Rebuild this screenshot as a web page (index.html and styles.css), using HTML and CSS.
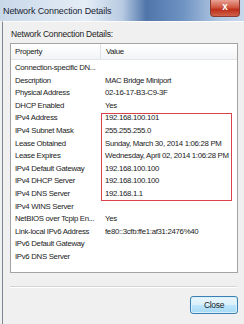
FILE: index.html
```html
<!DOCTYPE html>
<html>
<head>
    <title>Network Connection Details</title>
    <link rel="stylesheet" href="styles.css">
</head>
<body>
    <div class="window">
        <div class="titlebar">
            <span class="title">Network Connection Details</span>
            <span class="closeX">x</span>
        </div>
        <div class="frame">
            <div class="content">
                <div class="label">Network Connection Details:</div>
                <div class="listbox">
                    <div class="header">
                        <div class="col1">Property</div>
                        <div class="col2">Value</div>
                    </div>
                    <div class="rows">
                        <div class="row"><div class="col1">Connection-specific DN...</div><div class="col2"></div></div>
                        <div class="row"><div class="col1">Description</div><div class="col2">MAC Bridge Miniport</div></div>
                        <div class="row"><div class="col1">Physical Address</div><div class="col2">02-16-17-B3-C9-3F</div></div>
                        <div class="row"><div class="col1">DHCP Enabled</div><div class="col2">Yes</div></div>
                        <div class="highlight">
                            <div class="row"><div class="col1">IPv4 Address</div><div class="col2">192.168.100.101</div></div>
                            <div class="row"><div class="col1">IPv4 Subnet Mask</div><div class="col2">255.255.255.0</div></div>
                            <div class="row"><div class="col1">Lease Obtained</div><div class="col2">Sunday, March 30, 2014 1:06:28 PM</div></div>
                            <div class="row"><div class="col1">Lease Expires</div><div class="col2">Wednesday, April 02, 2014 1:06:28 PM</div></div>
                            <div class="row"><div class="col1">IPv4 Default Gateway</div><div class="col2">192.168.100.100</div></div>
                            <div class="row"><div class="col1">IPv4 DHCP Server</div><div class="col2">192.168.100.100</div></div>
                            <div class="row"><div class="col1">IPv4 DNS Server</div><div class="col2">192.168.1.1</div></div>
                            <div class="redbox"></div>
                        </div>
                        <div class="row"><div class="col1">IPv4 WINS Server</div><div class="col2"></div></div>
                        <div class="row"><div class="col1">NetBIOS over Tcpip En...</div><div class="col2">Yes</div></div>
                        <div class="row"><div class="col1">Link-local IPv6 Address</div><div class="col2">fe80::3cfb:ffe1:af31:2476%40</div></div>
                        <div class="row"><div class="col1">IPv6 Default Gateway</div><div class="col2"></div></div>
                        <div class="row"><div class="col1">IPv6 DNS Server</div><div class="col2"></div></div>
                    </div>
                </div>
                <div class="separator"></div>
                <div class="buttons">
                    <div class="button">Close</div>
                </div>
            </div>
        </div>
    </div>
</body>
</html>
```

FILE: styles.css
```css
html, body {margin: 0; padding: 0;}

body
{
    background: #f0f0f0;
    font-family: "Liberation Sans", Arial, sans-serif;
    font-size: 7.8px;
    letter-spacing: -0.3px;
    color: #222;
    width: 244px;
    height: 324px;
    overflow: hidden;
}

.titlebar
{
    height: 21px;
    display: flex;
    align-items: flex-start;
    background: linear-gradient(to right, #c9d8e9 0%, #e4edf6 35%, #b8cbe2 50%, #4f75aa 60%, #6f93c2 75%, #b3c9e3 90%, #c8d8ec 100%);
}

.title
{
    font-size: 9px;
    letter-spacing: -0.1px;
    color: #1a2433;
    padding: 6px 0 0 3px;
}

.closeX
{
    margin-left: auto;
    margin-right: 4px;
    width: 28px;
    height: 16px;
    background: linear-gradient(to bottom, #e8a193 0%, #d15a45 45%, #bd2f1a 60%, #d0624b 100%);
    border: 1px solid #8a3b32;
    border-top: none;
    border-radius: 0 0 4px 4px;
    color: #fff;
    font-weight: bold;
    font-size: 10px;
    letter-spacing: 0;
    text-align: center;
    line-height: 14px;
}

.frame
{
    border-left: 1px solid #7d8691;
    border-top: 1px solid #fbfbfb;
    margin-left: 2px;
    height: 302px;
}

.content
{
    padding: 7px 6px 0 7px;
}

.label
{
    font-size: 8.5px;
    letter-spacing: -0.2px;
    height: 14px;
    padding-left: 1px;
}

.listbox
{
    background: #fff;
    border: 1px solid #a3a3a3;
    height: 228px;
    width: 226px;
}

.header
{
    display: flex;
    height: 15px;
    line-height: 15px;
    border-bottom: 1px solid #e4e6ea;
    background: linear-gradient(to bottom, #ffffff, #f3f4f6);
}

.header .col1
{
    border-right: 1px solid #e0e2e6;
}

.col1
{
    width: 85px;
    padding-left: 4px;
    white-space: nowrap;
    overflow: hidden;
    flex: none;
}

.col2
{
    padding-left: 5px;
    white-space: nowrap;
}

.rows
{
    padding-top: 2px;
}

.row
{
    display: flex;
    height: 12.6px;
    line-height: 12.6px;
}

.highlight
{
    position: relative;
}

.redbox
{
    position: absolute;
    left: 90px;
    top: 1px;
    width: 129px;
    height: 86px;
    border: 1px solid #d9414b;
}

.separator
{
    margin-top: 13px;
    border-top: 1px solid #d5d5d5;
    border-bottom: 1px solid #ffffff;
    width: 227px;
}

.buttons
{
    display: flex;
    justify-content: flex-end;
    padding: 8px 0 0 0;
    width: 228px;
}

.button
{
    width: 46px;
    height: 16px;
    line-height: 16px;
    text-align: center;
    font-size: 8.5px;
    border: 1px solid #3c7fb1;
    border-radius: 3px;
    background: linear-gradient(to bottom, #eaf6fd 0%, #d9f0fc 50%, #bee6fd 51%, #a7d9f5 100%);
    box-shadow: inset 0 0 0 1px #d8f1fc;
}
```
